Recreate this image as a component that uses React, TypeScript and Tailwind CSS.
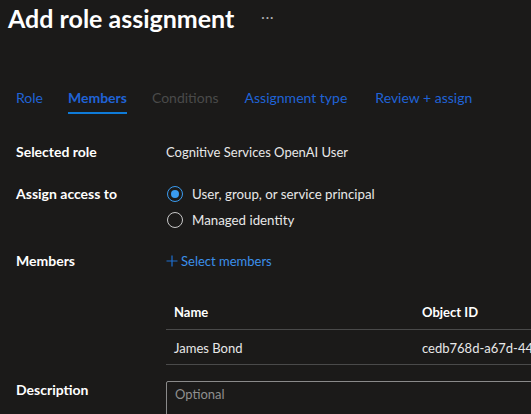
import React from "react";

export default function App() {
  const font = { fontFamily: 'Lato, "Open Sans", "Liberation Sans", sans-serif' };
  return (
    <div className="w-[531px] h-[414px] overflow-hidden bg-[#1b1a19] text-white" style={font}>
      <div className="flex items-center h-[36px] pl-[8px]">
        <h1 className="text-[25px] leading-[36px] font-bold text-white">Add role assignment</h1>
        <span className="ml-[27px] text-[13px] text-[#b0b0b0] leading-none -mt-[2px] tracking-[1px]">···</span>
      </div>

      <div className="flex gap-[25px] pl-[16px] mt-[52px] text-[14px] leading-[20px]">
        <div className="flex flex-col"><span className="text-[#2063d6]">Role</span></div>
        <div className="flex flex-col">
          <span className="text-[#2063d6] font-bold">Members</span>
          <div className="h-[2px] bg-[#0f7bd8] mt-[4px]" />
        </div>
        <div className="flex flex-col"><span className="text-[#4a4a4a]">Conditions</span></div>
        <div className="flex flex-col ml-[1px]"><span className="text-[#2063d6]">Assignment type</span></div>
        <div className="flex flex-col ml-[3px]"><span className="text-[#2063d6]">Review + assign</span></div>
      </div>

      <div className="pl-[16px] mt-[28px] text-[14px] leading-[20px]">
        <div className="grid grid-cols-[150px_1fr]">
          <div className="font-bold">Selected role</div>
          <div className="text-[#e8e8e8] text-[13px]">Cognitive Services OpenAI User</div>
        </div>

        <div className="grid grid-cols-[150px_1fr] mt-[22px]">
          <div className="font-bold">Assign access to</div>
          <div className="flex flex-col gap-[6px]">
            <div className="flex items-center">
              <span className="ml-[1px] w-[16px] h-[16px] rounded-full border-[1.5px] border-[#3a9bef] flex items-center justify-center">
                <span className="w-[8px] h-[8px] rounded-full bg-[#3a9bef]" />
              </span>
              <span className="ml-[9px] text-[#e8e8e8] text-[13.3px]">User, group, or service principal</span>
            </div>
            <div className="flex items-center">
              <span className="ml-[1px] w-[16px] h-[16px] rounded-full border-[1.5px] border-[#c8c8c8]" />
              <span className="ml-[9px] text-[#e8e8e8] text-[13.3px]">Managed identity</span>
            </div>
          </div>
        </div>

        <div className="grid grid-cols-[150px_1fr] mt-[21px]">
          <div className="font-bold">Members</div>
          <div className="flex items-center text-[#3b90ea] text-[13px]">
            <svg width="12" height="12" viewBox="0 0 12 12" className="mr-[3px]">
              <path d="M6 0.5V11.5M0.5 6H11.5" stroke="#1f6fd0" strokeWidth="1.2" />
            </svg>
            <span>Select members</span>
          </div>
        </div>

        <div className="grid grid-cols-[150px_1fr] mt-[23px]">
          <div />
          <div className="w-[400px] overflow-hidden text-[13px]">
            <div className="flex h-[36px] items-center border-b border-[#4a4a4a] font-bold">
              <div className="w-[256px] shrink-0 pl-[8px]">Name</div>
              <div className="whitespace-nowrap">Object ID</div>
            </div>
            <div className="flex h-[35px] items-center border-b border-[#4a4a4a] text-[#e8e8e8] pt-[1px]">
              <div className="w-[256px] shrink-0 pl-[8px]">James Bond</div>
              <div className="whitespace-nowrap">cedb768d-a67d-4412-9e3a-5c1f8b2d7a90</div>
            </div>
          </div>
        </div>

        <div className="grid grid-cols-[150px_1fr] mt-[16px]">
          <div className="font-bold -mt-[1px]">Description</div>
          <div className="w-[400px] h-[60px] border border-[#8a8a8a] rounded-[2px] pl-[8px] pt-[2px] text-[#8f8f8f] text-[13px]">Optional</div>
        </div>
      </div>
    </div>
  );
}
